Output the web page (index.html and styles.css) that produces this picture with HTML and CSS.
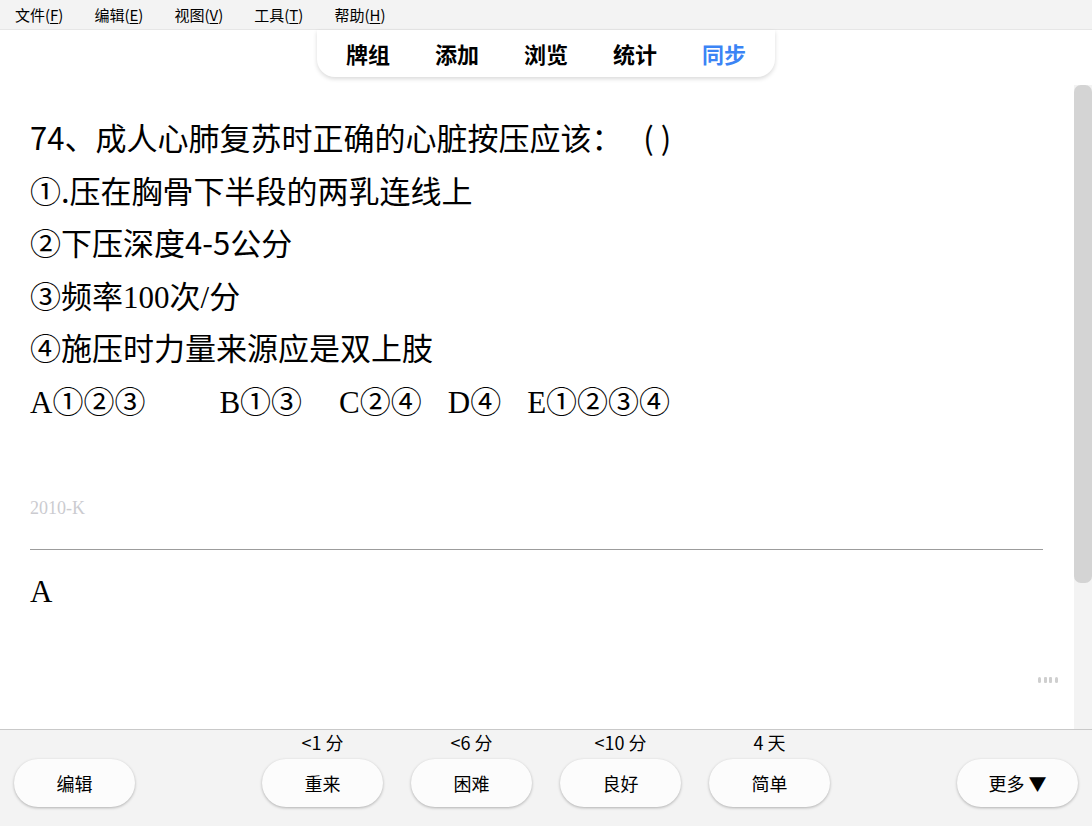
FILE: index.html
```html
<!DOCTYPE html>
<html lang="zh">
<head>
    <meta charset="UTF-8">
    <title>Anki</title>
    <link rel="stylesheet" href="styles.css">
</head>
<body>
    <div class="menubar">
        <span class="menu">文件(<u>F</u>)</span>
        <span class="menu">编辑(<u>E</u>)</span>
        <span class="menu">视图(<u>V</u>)</span>
        <span class="menu">工具(<u>T</u>)</span>
        <span class="menu">帮助(<u>H</u>)</span>
    </div>

    <div class="toolbar">
        <nav class="tabs">
            <span class="tab">牌组</span>
            <span class="tab">添加</span>
            <span class="tab">浏览</span>
            <span class="tab">统计</span>
            <span class="tab active">同步</span>
        </nav>
    </div>

    <div class="main">
        <div class="page">
            <div class="question">
                <div class="line">74、成人心肺复苏时正确的心脏按压应该：&nbsp;&nbsp;&nbsp;( )</div>
                <div class="line">①.压在胸骨下半段的两乳连线上</div>
                <div class="line">②下压深度4-5公分</div>
                <div class="line">③频率<span class="serif">100</span>次<span class="serif">/</span>分</div>
                <div class="line">④施压时力量来源应是双上肢</div>
                <div class="line options">
                    <span class="opt"><span class="serif">A</span>①②③</span>
                    <span class="opt b"><span class="serif">B</span>①③</span>
                    <span class="opt c"><span class="serif">C</span>②④</span>
                    <span class="opt d"><span class="serif">D</span>④</span>
                    <span class="opt e"><span class="serif">E</span>①②③④</span>
                </div>
            </div>
            <div class="source">2010-K</div>
            <hr class="divider">
            <div class="answer">A</div>

            <svg class="grip" width="22" height="8" viewBox="0 0 22 8">
                <rect x="1" y="1" width="3" height="6" rx="1.5" fill="#cfcfcf"/>
                <rect x="7" y="1" width="3" height="6" rx="1" fill="#cfcfcf"/>
                <rect x="12" y="1" width="3" height="6" rx="1" fill="#cfcfcf"/>
                <rect x="18" y="1" width="3" height="6" rx="1.5" fill="#cfcfcf"/>
            </svg>
        </div>
        <div class="scroll">
            <div class="track">
                <div class="thumb"></div>
            </div>
        </div>
    </div>

    <div class="bottombar">
        <div class="side left">
            <button class="btn">编辑</button>
        </div>
        <div class="answers">
            <div class="ease">
                <span class="due">&lt;1 分</span>
                <button class="btn">重来</button>
            </div>
            <div class="ease">
                <span class="due">&lt;6 分</span>
                <button class="btn">困难</button>
            </div>
            <div class="ease">
                <span class="due">&lt;10 分</span>
                <button class="btn">良好</button>
            </div>
            <div class="ease">
                <span class="due">4 天</span>
                <button class="btn">简单</button>
            </div>
        </div>
        <div class="side right">
            <button class="btn">更多 ▼</button>
        </div>
    </div>
</body>
</html>
```

FILE: styles.css
```css
html, body {
    margin: 0;
    height: 100%;
}
body {
    display: flex;
    flex-direction: column;
    background: #fff;
    font-family: "Noto Sans CJK SC", "Liberation Sans", sans-serif;
    color: #000;
    overflow: hidden;
}
/* menu bar */
.menubar {
    height: 29px;
    background: #f3f3f3;
    border-bottom: 1px solid #e6e6e6;
    display: flex;
    align-items: center;
    gap: 31px;
    padding-left: 15px;
    font-size: 15px;
}
.menu u {
    text-decoration: underline;
    text-underline-offset: 2px;
}
/* top tabs */
.toolbar {
    height: 47px;
    display: flex;
    justify-content: center;
}
.tabs {
    display: flex;
    padding: 0 6.5px;
    background: #fff;
    border-radius: 0 0 18px 18px;
    box-shadow: 0 2px 4px rgba(0, 0, 0, 0.15);
}
.tab {
    width: 89px;
    text-align: center;
    font-size: 22px;
    font-weight: bold;
    line-height: 47px;
}
.tab.active {
    color: #3b84f5;
}
/* card */
.main {
    flex: 1;
    display: flex;
    min-height: 0;
}
.page {
    flex: 1;
    position: relative;
    padding: 34px 31px 0 30px;
}
.question {
    font-size: 31px;
    line-height: 52.5px;
}
.line {
    height: 52.5px;
    white-space: nowrap;
}
.serif {
    font-family: "Liberation Serif", serif;
}
.options {
    display: flex;
}
.opt.b { margin-left: 74px; }
.opt.c { margin-left: 37px; }
.opt.d { margin-left: 26px; }
.opt.e { margin-left: 26px; }
.source {
    margin-top: 71px;
    font-family: "Liberation Serif", serif;
    font-size: 18px;
    line-height: 22px;
    color: #cbcbd0;
}
.divider {
    margin: 30px 0 0;
    border: 0;
    border-top: 1px solid #9c9c9c;
}
.answer {
    margin-top: 22px;
    font-family: "Liberation Serif", serif;
    font-size: 31px;
    line-height: 40px;
}
.grip {
    position: absolute;
    left: 1037px;
    top: 599px;
}
/* fake scrollbar */
.scroll {
    width: 18px;
    padding-top: 8px;
    display: flex;
    flex-direction: column;
}
.track {
    flex: 1;
    background: #f3f3f3;
}
.thumb {
    height: 498px;
    background: #d4d4d4;
    border-radius: 7px;
}
/* answer buttons */
.bottombar {
    height: 97px;
    box-sizing: border-box;
    border-top: 1px solid #c9c9c9;
    background: #f3f3f3;
    display: grid;
    grid-template-columns: 1fr auto 1fr;
    align-items: end;
    padding: 0 14px 19px;
}
.side.right {
    display: flex;
    justify-content: flex-end;
}
.answers {
    display: flex;
    gap: 28px;
}
.ease {
    display: flex;
    flex-direction: column;
    align-items: center;
}
.due {
    font-size: 18px;
    line-height: 22px;
    margin-bottom: 6px;
}
.btn {
    width: 121px;
    height: 48px;
    border: 0;
    border-radius: 24px;
    background: #fcfcfc;
    box-shadow: 0 1px 3px rgba(0, 0, 0, 0.28);
    font-family: "Noto Sans CJK SC", "Liberation Sans", sans-serif;
    font-size: 18px;
    color: #000;
    padding: 0;
}
```
